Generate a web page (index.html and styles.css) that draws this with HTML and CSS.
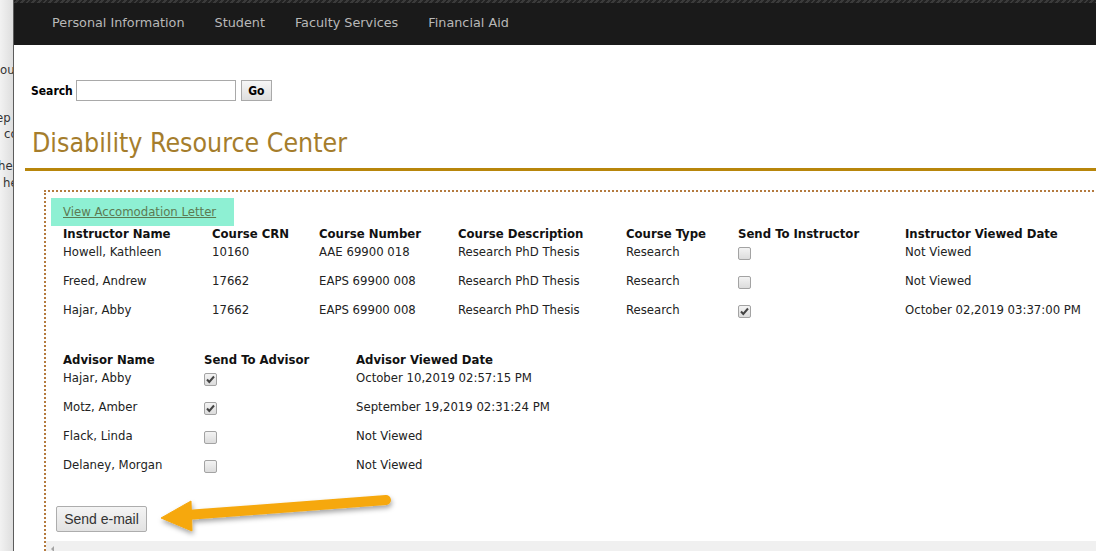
FILE: index.html
```html
<!DOCTYPE html>
<html lang="en">
<head>
    <meta charset="UTF-8">
    <title>Disability Resource Center</title>
    <link rel="stylesheet" href="styles.css">
</head>
<body>
<div class="frame">
    <div class="behind">
        <p class="b1">ou</p>
        <p class="b2">ep t</p>
        <p class="b3">co</p>
        <p class="b4">he</p>
        <p class="b5">he</p>
    </div>
    <div class="page">
        <div class="topnav">
            <ul>
                <li>Personal Information</li>
                <li>Student</li>
                <li>Faculty Services</li>
                <li>Financial Aid</li>
            </ul>
        </div>
        <form class="search">
            <label>Search</label>
            <input type="text" class="search-box">
            <button type="button" class="go">Go</button>
        </form>
        <h1 class="title">Disability Resource Center</h1>
        <div class="panel">
            <div class="letter"><a href="#">View Accomodation Letter</a></div>
            <table class="grid instructors">
                <colgroup>
                    <col style="width:149px"><col style="width:107px"><col style="width:139px">
                    <col style="width:168px"><col style="width:112px"><col style="width:167px"><col style="width:180px">
                </colgroup>
                <tr>
                    <th>Instructor Name</th><th>Course CRN</th><th>Course Number</th>
                    <th>Course Description</th><th>Course Type</th><th>Send To Instructor</th><th>Instructor Viewed Date</th>
                </tr>
                <tr>
                    <td>Howell, Kathleen</td><td>10160</td><td>AAE 69900 018</td>
                    <td>Research PhD Thesis</td><td>Research</td><td><span class="cb"></span></td><td>Not Viewed</td>
                </tr>
                <tr>
                    <td>Freed, Andrew</td><td>17662</td><td>EAPS 69900 008</td>
                    <td>Research PhD Thesis</td><td>Research</td><td><span class="cb"></span></td><td>Not Viewed</td>
                </tr>
                <tr>
                    <td>Hajar, Abby</td><td>17662</td><td>EAPS 69900 008</td>
                    <td>Research PhD Thesis</td><td>Research</td>
                    <td><span class="cb checked"><svg viewBox="0 0 11 11"><path d="M2 5.5 L4.3 8 L9 2.5" /></svg></span></td>
                    <td>October 02,2019 03:37:00 PM</td>
                </tr>
            </table>
            <table class="grid advisors">
                <colgroup>
                    <col style="width:141px"><col style="width:152px"><col style="width:260px">
                </colgroup>
                <tr>
                    <th>Advisor Name</th><th>Send To Advisor</th><th>Advisor Viewed Date</th>
                </tr>
                <tr>
                    <td>Hajar, Abby</td>
                    <td><span class="cb checked"><svg viewBox="0 0 11 11"><path d="M2 5.5 L4.3 8 L9 2.5" /></svg></span></td>
                    <td>October 10,2019 02:57:15 PM</td>
                </tr>
                <tr>
                    <td>Motz, Amber</td>
                    <td><span class="cb checked"><svg viewBox="0 0 11 11"><path d="M2 5.5 L4.3 8 L9 2.5" /></svg></span></td>
                    <td>September 19,2019 02:31:24 PM</td>
                </tr>
                <tr>
                    <td>Flack, Linda</td><td><span class="cb"></span></td><td>Not Viewed</td>
                </tr>
                <tr>
                    <td>Delaney, Morgan</td><td><span class="cb"></span></td><td>Not Viewed</td>
                </tr>
            </table>
            <button type="button" class="send">Send e-mail</button>
            <div class="hscroll"><span class="arr"></span></div>
        </div>
    </div>
</div>
<svg class="pointer" width="1096" height="551" viewBox="0 0 1096 551">
    <defs>
        <filter id="shade" x="-20%" y="-50%" width="140%" height="200%">
            <feDropShadow dx="1" dy="3" stdDeviation="2.5" flood-color="#000" flood-opacity="0.35"/>
        </filter>
    </defs>
    <g filter="url(#shade)" fill="#f6a80f" stroke="#f6a80f">
        <line x1="386" y1="500" x2="186" y2="515" stroke-width="10" stroke-linecap="round"/>
        <polygon points="161,518 191,501 192,531" stroke-width="1" stroke-linejoin="round"/>
    </g>
</svg>
</body>
</html>
```

FILE: styles.css
```css
*{
    margin: 0;
    padding: 0;
    box-sizing: border-box;
}
body{
    width: 1096px;
    height: 551px;
    overflow: hidden;
    position: relative;
    font-family: "DejaVu Sans Condensed", "DejaVu Sans", sans-serif;
    font-stretch: condensed;
    font-size: 13px;
    color: #222;
    background: #fff;
}
ul{
    list-style-type: none;
}
.frame{
    display: flex;
    height: 551px;
}
.behind{
    width: 14px;
    flex: none;
    overflow: hidden;
    background: linear-gradient(to right, #f2f2f2, #dedede);
    border-right: 1px solid #5c5c5c;
    color: #333;
    white-space: nowrap;
    font-size: 13px;
    padding-top: 62px;
}
.behind p{
    line-height: 16px;
}
.behind .b2{
    margin-top: 32px;
    margin-left: -4px;
}
.behind .b3{
    margin-left: 4px;
}
.behind .b4{
    margin-top: 16px;
    margin-left: -2px;
}
.behind .b5{
    margin-top: 1px;
    margin-left: 3px;
}
.page{
    flex: 1;
    overflow: hidden;
}
.topnav{
    height: 45px;
    background: #1a1a1a;
    border-top: 3px solid transparent;
    border-image: repeating-linear-gradient(135deg, #3b3b3b 0 2px, #222 2px 4px) 3;
}
.topnav ul{
    display: flex;
    padding-left: 38px;
    gap: 30px;
}
.topnav li{
    color: #b8b8b8;
    line-height: 40px;
    font-family: "DejaVu Sans", sans-serif;
    font-stretch: normal;
    font-size: 12.8px;
}
.search{
    display: flex;
    align-items: center;
    margin-top: 35px;
    padding-left: 17px;
    height: 21px;
}
.search label{
    font-weight: bold;
    font-size: 12px;
    margin-right: 3px;
    color: #000;
}
.search-box{
    width: 160px;
    height: 21px;
    border: 1px solid #a9a9a9;
}
.go{
    width: 31px;
    height: 21px;
    margin-left: 5px;
    border: 1px solid #a9a9a9;
    background: linear-gradient(#f6f6f6, #dedede);
    font-family: inherit;
    font-weight: bold;
    font-size: 12px;
    color: #000;
}
.title{
    margin: 26px 0 0 11px;
    padding: 0 0 9px 7px;
    font-size: 26.5px;
    line-height: 32px;
    font-weight: normal;
    color: #a57d2c;
    border-bottom: 3px solid #b8860b;
}
.panel{
    margin: 19px -30px 0 30px;
    padding: 6px 5px 0;
    border: 2px dotted #b47a3e;
    border-right: none;
    height: 400px;
}
.letter{
    display: inline-block;
    background: #8ef0d3;
    padding: 0 18px 0 12px;
    line-height: 28px;
    height: 28px;
}
.letter a{
    color: #5c7a52;
}
.grid{
    border-collapse: collapse;
    table-layout: fixed;
    margin-left: 12px;
}
.grid th{
    text-align: left;
    font-weight: bold;
    line-height: 15px;
    padding-bottom: 2px;
    color: #111;
    white-space: nowrap;
}
.grid td{
    vertical-align: top;
    line-height: 16px;
    height: 29px;
    padding: 1px 0 12px;
    white-space: nowrap;
}
.advisors{
    margin-top: 22px;
}
.cb{
    display: block;
    width: 13px;
    height: 13px;
    margin: 3px 0 -1px;
    border: 1px solid #a3a3a3;
    border-radius: 2px;
    background: linear-gradient(#f3f3f3, #dcdcdc);
}
.cb svg{
    display: block;
    width: 11px;
    height: 11px;
}
.cb svg path{
    fill: none;
    stroke: #444;
    stroke-width: 2;
}
.send{
    display: block;
    margin: 21px 0 0 5px;
    width: 91px;
    height: 26px;
    border: 1px solid #adadad;
    border-radius: 2px;
    background: linear-gradient(#f4f4f4, #e2e2e2);
    font-family: "Liberation Sans", Arial, sans-serif;
    font-size: 14px;
    color: #333;
}
.hscroll{
    margin: 9px 0 0 -5px;
    height: 17px;
    background: #f0f0f0;
    position: relative;
}
.hscroll .arr{
    position: absolute;
    left: 5px;
    top: 5px;
    border-top: 3px solid transparent;
    border-bottom: 3px solid transparent;
    border-right: 3px solid #a3a3a3;
}
.pointer{
    position: absolute;
    left: 0;
    top: 0;
    pointer-events: none;
}
```
